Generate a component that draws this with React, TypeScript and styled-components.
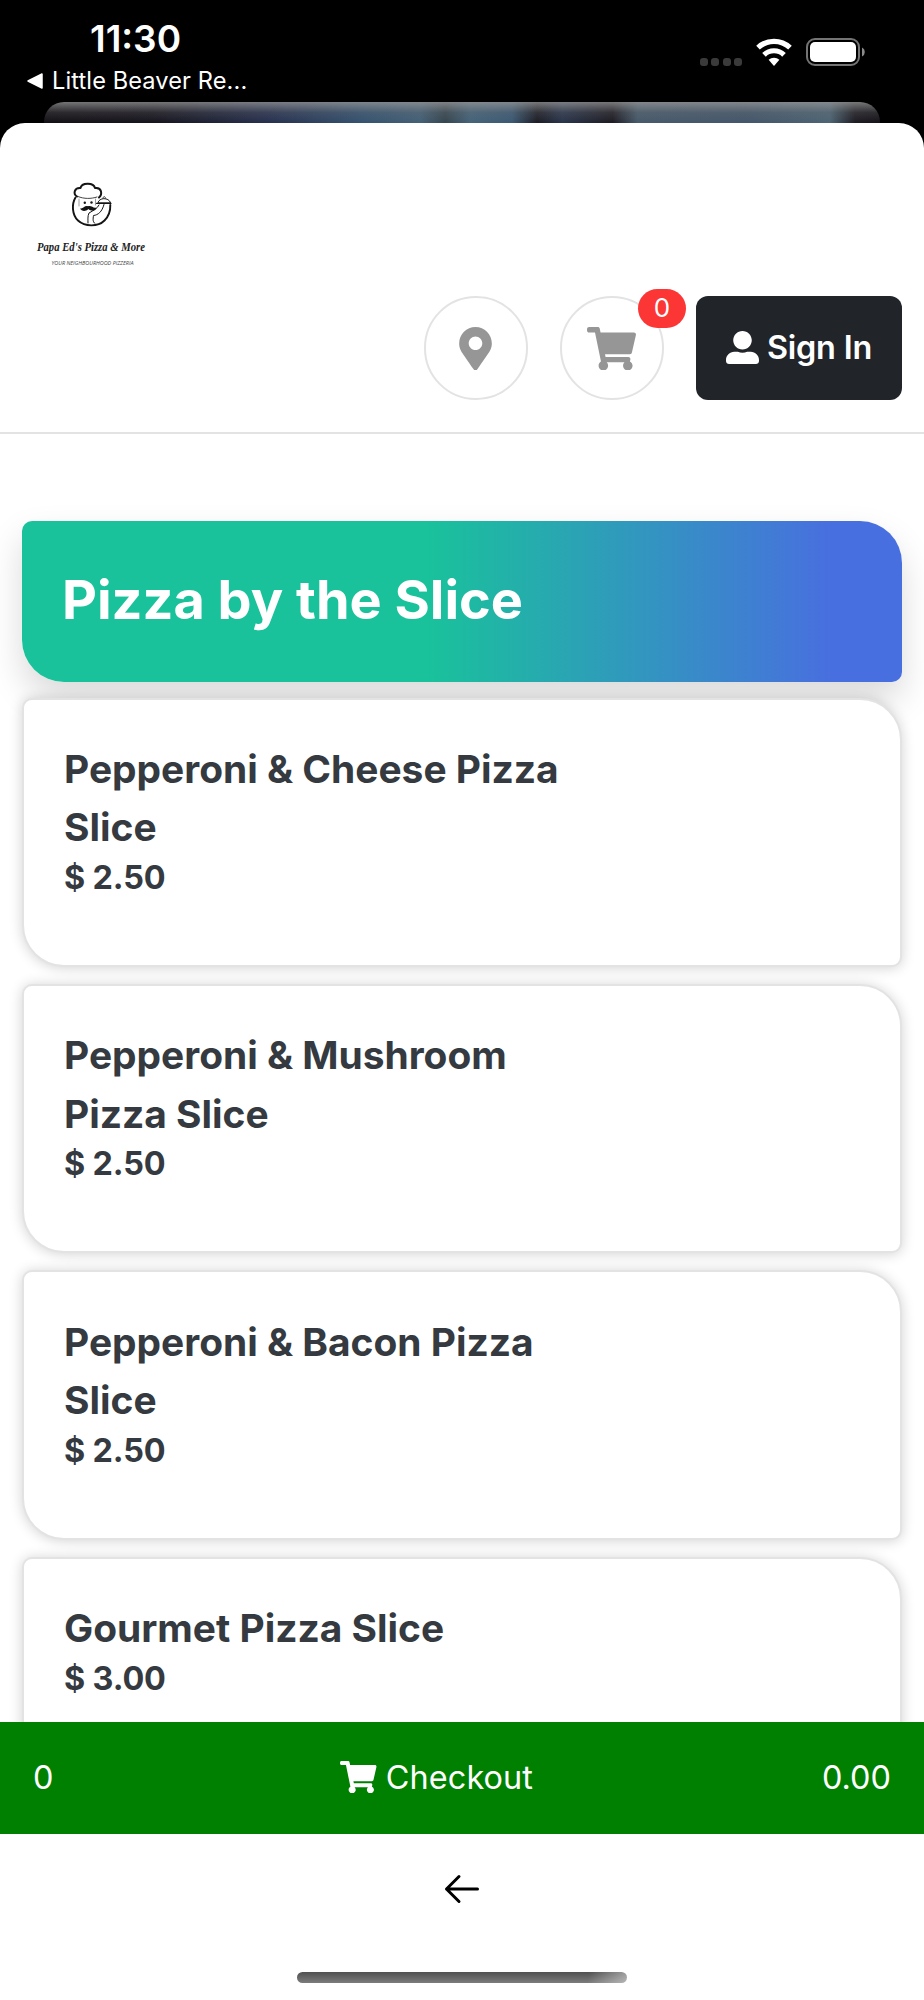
import React from "react";
import styled, { createGlobalStyle, css } from "styled-components";
import { FaMapMarkerAlt, FaShoppingCart, FaUserAlt } from "react-icons/fa";

const GlobalStyle = createGlobalStyle`
  *, *::before, *::after { box-sizing: border-box; }
  body {
    margin: 0;
    background: #000;
    font-family: Inter, "Liberation Sans", sans-serif;
    color: #343a40;
  }
`;

const Screen = styled.div`
  width: 924px;
  height: 2000px;
  display: flex;
  flex-direction: column;
  background: #000;
  overflow: hidden;
`;

const StatusBar = styled.header`
  height: 102px;
  flex: none;
  display: flex;
  justify-content: space-between;
  padding: 16px 58px 0 27px;
  color: #fff;
`;

const ClockGroup = styled.div`
  display: flex;
  flex-direction: column;
`;

const Clock = styled.div`
  padding-left: 63px;
  font-size: 37px;
  line-height: 45px;
  font-weight: 600;
`;

const BackToApp = styled.div`
  display: flex;
  align-items: center;
  gap: 8px;
  font-size: 23.6px;
  line-height: 29px;
  margin-top: 5px;
  letter-spacing: 0.1px;
`;

const StatusIcons = styled.div`
  display: flex;
  align-items: flex-start;
  padding-top: 22px;
`;

const SignalDots = styled.div`
  display: flex;
  gap: 3.5px;
  margin: 20px 13px 0 0;
`;

const Dot = styled.span`
  width: 8px;
  height: 8px;
  border-radius: 3px;
  background: #3a3a3a;
`;

const PeekSheet = styled.div`
  height: 21px;
  flex: none;
  margin: 0 44px;
  border-radius: 20px 20px 0 0;
  background:
    linear-gradient(180deg, rgba(150, 150, 150, 0.75), rgba(120, 120, 120, 0.25) 50%, rgba(80, 80, 80, 0) 100%),
    linear-gradient(90deg, #120f14 0%, #15131c 13%, #26304f 27%, #345270 38%, #436077 45%, #35454f 48%, #44637a 51%, #3b5974 56%, #1b1b24 59%, #28344b 62%, #1d1a22 68%, #465a6b 71%, #43566b 84%, #4c6474 94%, #1d1b22 97%, #141217 100%);
`;

const Sheet = styled.main`
  flex: 1;
  min-height: 0;
  display: flex;
  flex-direction: column;
  background: #fff;
  border-radius: 25px 25px 0 0;
  overflow: hidden;
`;

const SiteHeader = styled.div`
  flex: none;
  height: 311px;
  padding: 47px 22px 0 20px;
  border-bottom: 2px solid #e3e3e3;
`;

const HeaderActions = styled.div`
  display: flex;
  justify-content: flex-end;
  margin-top: 16px;
`;

const RoundButton = styled.button`
  position: relative;
  display: flex;
  align-items: center;
  justify-content: center;
  width: 103.5px;
  height: 103.5px;
  padding: 0;
  margin-right: 32.5px;
  border: 2px solid #e3e3e3;
  border-radius: 50%;
  background: #fff;
  color: #969696;

  > svg {
    width: 49px;
    height: 43.5px;
    margin-top: 1px;
  }
`;

const CountBadge = styled.span`
  position: absolute;
  top: -9px;
  right: -24.5px;
  width: 48px;
  height: 39px;
  border-radius: 20px;
  background: #fc3535;
  color: #fff;
  font-family: Inter, sans-serif;
  font-size: 26px;
  line-height: 38px;
  text-align: center;
`;

const SignInButton = styled.button`
  display: flex;
  align-items: center;
  justify-content: center;
  gap: 8px;
  width: 206px;
  height: 103.5px;
  padding: 0;
  border: 0;
  border-radius: 12px;
  background: #212429;
  color: #fff;
  font-family: Inter, sans-serif;
  font-size: 32.4px;
  font-weight: 600;
  letter-spacing: -0.2px;
`;

const leafCorners = css`
  border-radius: 10px 42px 10px 42px;
`;

const Menu = styled.section`
  flex: 1;
  min-height: 0;
  overflow: hidden;
  padding: 87px 22px 0;
`;

const CategoryBanner = styled.h1`
  ${leafCorners}
  display: flex;
  align-items: center;
  height: 161px;
  margin: 0 0 16px;
  padding: 0 40px 4px;
  background: linear-gradient(90deg, #19c29b 46%, #486fdf 92%);
  box-shadow: 0 17px 35px rgba(0, 0, 0, 0.15);
  color: #fff;
  font-size: 54px;
  line-height: 65px;
  font-weight: 700;
`;

const ItemCard = styled.article`
  ${leafCorners}
  height: 269.2px;
  margin-bottom: 17px;
  padding: 40.2px 40px 0;
  border: 2px solid #e3e3e3;
  background: #fff;
  box-shadow: 0 1px 13px rgba(0, 0, 0, 0.18);
  font-weight: 700;
`;

const ItemName = styled.h2`
  width: 530px;
  margin: 0;
  font-size: 38.9px;
  line-height: 58.3px;
  font-weight: 700;
`;

const Price = styled.div`
  padding-top: 1.5px;
  font-size: 32.4px;
  line-height: 40.6px;
  letter-spacing: -0.15px;
`;

const CheckoutBar = styled.div`
  flex: none;
  display: flex;
  align-items: center;
  justify-content: space-between;
  height: 112px;
  padding: 0 33px 2px;
  background: #008000;
  color: #fff;
  font-size: 32.4px;
  font-weight: 370;
`;

const CheckoutLabel = styled.div`
  display: flex;
  align-items: center;
  gap: 9px;
  margin-right: 2px;
  letter-spacing: 0.1px;

  > svg {
    width: 36.5px;
    height: 32.4px;
  }
`;

const BottomBar = styled.nav`
  flex: none;
  height: 166px;
  display: flex;
  flex-direction: column;
  align-items: center;
  justify-content: space-between;
  padding: 40px 0 17px;
  background: #fff;
`;

const HomeIndicator = styled.div`
  width: 330px;
  height: 11px;
  border-radius: 6px;
  background:
    linear-gradient(100deg, rgba(255, 255, 255, 0) 88%, rgba(255, 255, 255, 0.45) 100%),
    linear-gradient(180deg, #505050, #7c7c7c);
`;

const LogoArt = styled.svg`
  display: block;
  overflow: visible;
`;

const WifiIcon = () => (
  <svg width="38" height="28" viewBox="0 0 38 28">
    <path d="M19 28 L13.6 21.8 A8.2 8.2 0 0 1 24.4 21.8 Z" fill="#fff" />
    <path d="M9 16.8 A14.4 14.4 0 0 1 29 16.8" fill="none" stroke="#fff" strokeWidth="5.2" />
    <path d="M3 9.6 A23.4 23.4 0 0 1 35 9.6" fill="none" stroke="#fff" strokeWidth="5.2" />
  </svg>
);

const BatteryIcon = () => (
  <svg width="60" height="28" viewBox="0 0 60 28">
    <rect x="1" y="1" width="52" height="26" rx="8" fill="none" stroke="#747474" strokeWidth="2" />
    <rect x="4" y="4" width="46" height="20" rx="5" fill="#fff" />
    <path d="M56 9.5 A5 5 0 0 1 56 18.5 Z" fill="#8a8a8a" />
  </svg>
);

const Logo = () => (
  <LogoArt width="150" height="110" viewBox="0 0 150 110">
    <g fill="none" stroke="#151515" strokeLinecap="round" strokeLinejoin="round">
      <path d="M55.5 27.5 C51.5 34 52 45 58 50.5 C65 57 78 57 84.5 50.5 C89 46 90.5 41 90.3 35" strokeWidth="1.9" />
      <path d="M57 26.5 C53 24 54 17.5 60.5 18 C61.5 12.5 73.5 12 75 18 C82 17 82.5 24.5 79 27.5" strokeWidth="2" />
      <path d="M58 26.5 C64 29 71 29 77 27" strokeWidth="0.8" />
      <path d="M59 29 V36 M75.5 29 V35" strokeWidth="0.7" stroke="#777" />
      <path d="M78 32.5 C79 27.5 88.5 27 90.5 32.5 Z" strokeWidth="1" />
      <path d="M76.5 33.3 H91" strokeWidth="1.3" />
      <path d="M83 28 C83.3 26 85.2 26 85.5 28" strokeWidth="0.8" />
      <path d="M84 34.5 C82 42 78 45 73.5 45.5 C73 49 72.5 52 75 53.5 M79 35 C77 39 74 40 69 43 C67.5 46 68 50 68 53" strokeWidth="1" />
    </g>
    <circle cx="64.8" cy="32.8" r="1.2" fill="#151515" />
    <circle cx="71.5" cy="32.5" r="1.2" fill="#151515" />
    <path d="M60 38.2 C63 39.5 64.5 35 68 36.3 C71.5 35 73.5 39 76.5 37.4 C75.5 41.5 71 41.5 68.3 39 C65.5 42 61.5 41.5 60 38.2 Z" fill="#151515" />
    <text x="17" y="80.5" textLength="108" lengthAdjust="spacingAndGlyphs" fontFamily="Liberation Serif, serif" fontStyle="italic" fontWeight="700" fontSize="13" fill="#222">
      {"Papa Ed's Pizza & More"}
    </text>
    <text x="31.5" y="94.8" textLength="82" lengthAdjust="spacingAndGlyphs" fontFamily="Open Sans, sans-serif" fontStyle="italic" fontSize="5.4" fill="#444">
      YOUR NEIGHBOURHOOD PIZZERIA
    </text>
  </LogoArt>
);

const BatteryGap = styled.span`
  width: 13px;
`;

const UserIcon = styled(FaUserAlt)`
  width: 33px;
  height: 33px;
`;

const items = [
  { name: "Pepperoni & Cheese Pizza Slice", price: "$ 2.50" },
  { name: "Pepperoni & Mushroom Pizza Slice", price: "$ 2.50" },
  { name: "Pepperoni & Bacon Pizza Slice", price: "$ 2.50" },
  { name: "Gourmet Pizza Slice", price: "$ 3.00" },
];

export default function App() {
  return (
    <>
      <GlobalStyle />
      <Screen>
        <StatusBar>
          <ClockGroup>
            <Clock>11:30</Clock>
            <BackToApp>
              <svg width="17" height="16" viewBox="0 0 17 16">
                <path d="M1 8 L15 1 V15 Z" fill="#fff" stroke="#fff" strokeWidth="1.5" strokeLinejoin="round" />
              </svg>
              Little Beaver Re...
            </BackToApp>
          </ClockGroup>
          <StatusIcons>
            <SignalDots>
              <Dot />
              <Dot />
              <Dot />
              <Dot />
            </SignalDots>
            <WifiIcon />
            <BatteryGap />
            <BatteryIcon />
          </StatusIcons>
        </StatusBar>
        <PeekSheet />
        <Sheet>
          <SiteHeader>
            <Logo />
            <HeaderActions>
              <RoundButton aria-label="Locations">
                <FaMapMarkerAlt />
              </RoundButton>
              <RoundButton aria-label="Cart">
                <FaShoppingCart />
                <CountBadge>0</CountBadge>
              </RoundButton>
              <SignInButton>
                <UserIcon />
                Sign In
              </SignInButton>
            </HeaderActions>
          </SiteHeader>
          <Menu>
            <CategoryBanner>Pizza by the Slice</CategoryBanner>
            {items.map((item) => (
              <ItemCard key={item.name}>
                <ItemName>{item.name}</ItemName>
                <Price>{item.price}</Price>
              </ItemCard>
            ))}
          </Menu>
          <CheckoutBar>
            <span>0</span>
            <CheckoutLabel>
              <FaShoppingCart />
              Checkout
            </CheckoutLabel>
            <span>0.00</span>
          </CheckoutBar>
          <BottomBar>
            <svg width="36" height="30" viewBox="0 0 36 30" fill="none" stroke="#000" strokeWidth="3" strokeLinecap="round" strokeLinejoin="round">
              <path d="M33.5 15 H2.5 M15 2.5 L2.5 15 L15 27.5" />
            </svg>
            <HomeIndicator />
          </BottomBar>
        </Sheet>
      </Screen>
    </>
  );
}
